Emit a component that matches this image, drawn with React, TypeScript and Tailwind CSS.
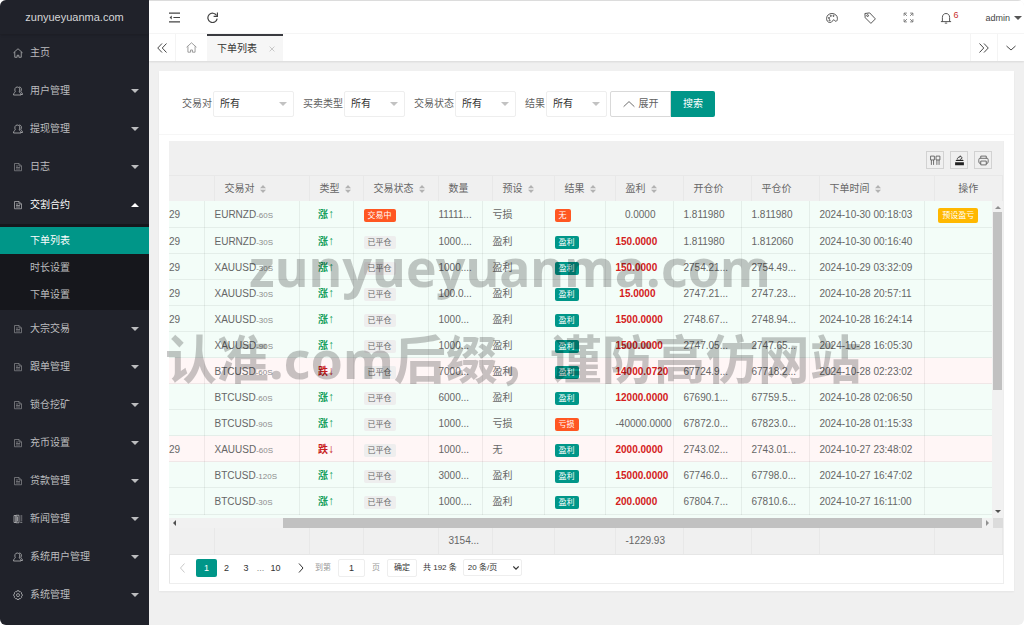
import React from "react";

type IconProps = { className?: string };

function classNames(...classes: (string | false | undefined)[]) {
  return classes.filter(Boolean).join(" ");
}

const Svg = ({
  className,
  children,
  box = "0 0 20 20",
}: IconProps & { children: React.ReactNode; box?: string }) => (
  <svg
    viewBox={box}
    className={classNames("shrink-0", className)}
    fill="none"
    stroke="currentColor"
    strokeWidth="1.5"
    aria-hidden="true"
  >
    {children}
  </svg>
);

const HomeIcon = ({ className }: IconProps) => (
  <Svg className={className}>
    <path d="M1 9.5 10 1.5l9 8M3.5 8v10.5h4.8v-4h3.4v4h4.8V8" />
  </Svg>
);

const UserIcon = ({ className }: IconProps) => (
  <Svg className={className}>
    <path d="M4.500 11.500C2.500 7 4 2 8.500 2S15 7 12.500 11.500c-.5 1 3.500 1.500 3.500 6.500H1c0-5 4-5.500 3.500-6.500z" />
    <path d="M12 2c5-.5 6 5.500 3.500 9 0 1.500 3.500 1.500 3.500 6h-3" />
  </Svg>
);

const FileIcon = ({ className }: IconProps) => (
  <Svg className={className}>
    <path d="M3 3h9l5 5v9.500H3zM12 3v5h5M6 8h4M6 11h8M6 14h8" />
  </Svg>
);

const BookIcon = ({ className }: IconProps) => (
  <Svg className={className}>
    <path d="M2 3h4v14H2zM6 2.500h6v15H6zM9 5v10M15 4h3.500M15 8h3.500M15 12h3.500M14.500 16.500h4" />
  </Svg>
);

const GearIcon = ({ className }: IconProps) => (
  <Svg className={className}>
    <path d="M8 1.500h4l.6 2.200 2.200-.6 2.600 2.700-.7 2.200 2 1v2.500l-2 1 .7 2.200-2.600 2.700-2.200-.6-.6 2.200H8l-.6-2.200-2.200.6-2.600-2.700.7-2.200-2-1V9l2-1-.7-2.200 2.600-2.700 2.200.6z" />
    <circle cx="10" cy="10.200" r="3" />
  </Svg>
);

const Caret = ({ up, className }: IconProps & { up?: boolean }) => (
  <svg
    viewBox="0 0 8 4"
    className={classNames("h-1 w-2 shrink-0", up && "rotate-180", className)}
    aria-hidden="true"
  >
    <path d="M0 0h8L4 4z" fill="currentColor" />
  </svg>
);

const SortIcon = () => (
  <svg viewBox="0 0 6 10" className="ml-[5px] h-[10px] w-[6px] shrink-0 text-[#b2b2b2]" aria-hidden="true">
    <path d="M0 4.200h6L3 1zM0 5.800h6L3 9z" fill="currentColor" />
  </svg>
);

const navTop = [
  { name: "主页", icon: HomeIcon, leaf: true },
  { name: "用户管理", icon: UserIcon },
  { name: "提现管理", icon: UserIcon },
  { name: "日志", icon: FileIcon },
  { name: "交割合约", icon: FileIcon, open: true },
];

const navSub = [
  { name: "下单列表", current: true },
  { name: "时长设置", current: false },
  { name: "下单设置", current: false },
];

const navBottom = [
  { name: "大宗交易", icon: FileIcon },
  { name: "跟单管理", icon: FileIcon },
  { name: "锁仓挖矿", icon: FileIcon },
  { name: "充币设置", icon: FileIcon },
  { name: "贷款管理", icon: FileIcon },
  { name: "新闻管理", icon: BookIcon },
  { name: "系统用户管理", icon: UserIcon },
  { name: "系统管理", icon: GearIcon },
];

type NavEntry = {
  name: string;
  icon: React.ComponentType<IconProps>;
  leaf?: boolean;
  open?: boolean;
};

const NavItem = ({ item }: { item: NavEntry }) => (
  <a
    href="#"
    className={classNames(
      "flex h-[38px] items-center pr-[10px] pl-[13px]",
      item.open ? "text-white" : "text-[#bcbdbf]"
    )}
  >
    <item.icon className={classNames("mr-[7px] h-[10px] w-[10px]", item.icon === FileIcon && "opacity-65")} />
    <span className="flex-1">{item.name}</span>
    {!item.leaf && <Caret up={item.open} />}
  </a>
);

const Sidebar = () => (
  <aside className="w-[149px] shrink-0 bg-[#20222a]">
    <div className="flex h-[34px] items-center justify-center text-[11px] text-[#d5d6d8] shadow-sm">
      zunyueyuanma.com
    </div>
    <nav>
      {navTop.map((item) => (
        <NavItem key={item.name} item={item} />
      ))}
      <div className="bg-[#16171c] pt-[3px] pb-[2px]">
        {navSub.map((item) => (
          <a
            key={item.name}
            href="#"
            className={classNames(
              "flex h-[27px] items-center pl-[30px]",
              item.current ? "bg-[#009688] text-white" : "text-[#bcbdbf]"
            )}
          >
            {item.name}
          </a>
        ))}
      </div>
      {navBottom.map((item) => (
        <NavItem key={item.name} item={item} />
      ))}
    </nav>
  </aside>
);

const topButton = "flex h-full w-[38px] items-center justify-center";

const TopBar = () => (
  <div className="flex h-[34px] items-center border-t border-b border-t-[#dcdcdc] border-b-[#f6f6f6] pt-px pr-[2px] pl-[6px] text-[#444]">
    <button className={topButton} aria-label="侧边伸缩">
      <Svg className="h-[11px] w-[11px]">
        <path d="M0 2h20M8 10h12M0 18h20" strokeWidth="2" />
        <path d="M5 6.500v7L1 10z" fill="currentColor" stroke="none" />
      </Svg>
    </button>
    <button className={topButton} aria-label="刷新">
      <Svg className="h-[11px] w-[11px]">
        <path d="M17.500 6.500A8.500 8.500 0 1 0 18.500 12" strokeWidth="2.200" />
        <path d="M19 1v7h-7" strokeWidth="2.200" />
      </Svg>
    </button>
    <div className="flex-1" />
    <button className={topButton} aria-label="主题">
      <Svg className="h-[12px] w-[12px]">
        <path d="M6 17.500C2.500 17 .8 14 1 10.500 1.300 5.500 5 2.500 10 2.500s9 3.500 9 8c0 3-.8 5-2.700 5-2 0-1.500-2.500-3.500-2.500-2.300 0-1.300 4.800-6.800 4.500z" />
        <circle cx="5" cy="10" r="1" />
        <circle cx="8" cy="6.500" r="1" />
        <circle cx="12.500" cy="6.500" r="1" />
        <circle cx="6" cy="13.800" r="1" />
      </Svg>
    </button>
    <button className={topButton} aria-label="便签">
      <Svg className="h-[12px] w-[12px]">
        <path d="M1.500 2.500 9.500 1.500l9.500 10-7.500 7.500L2 9.500z" />
        <circle cx="6" cy="6" r="1.500" />
      </Svg>
    </button>
    <button className={classNames(topButton, "text-[#666]")} aria-label="全屏">
      <Svg className="h-[11px] w-[11px]">
        <path d="M2 7V2h5M2.500 2.500 7 7M13 2h5v5M17.500 2.500 13 7M2 13v5h5M2.500 17.500 7 13M18 13v5h-5M17.500 17.500 13 13" />
      </Svg>
    </button>
    <button className={classNames(topButton, "relative")} aria-label="消息">
      <Svg className="h-[12px] w-[12px]">
        <path d="M1.500 16h17M4 16V9c0-4 2.500-6.500 6-6.500S16 5 16 9v7M8 18.500h4" />
      </Svg>
      <span className="absolute top-[7px] right-[7px] text-[9px] leading-3 text-[#c9302c]">6</span>
    </button>
    <button className="flex items-center gap-1 pl-[20px] text-[9px]">
      admin
      <Caret className="text-[#555]" />
    </button>
  </div>
);

const DoubleChevron = ({ className }: IconProps) => (
  <Svg className={classNames("h-[10px] w-[10px]", className)}>
    <path d="M10 1 1.500 10l8.500 9M19 1l-8.500 9 8.500 9" strokeWidth="1.800" />
  </Svg>
);

const TabBar = () => (
  <div className="relative flex h-[27px] items-stretch bg-white text-[#333] shadow-[0_1px_2px_rgba(0,0,0,0.1)]">
    <button className="flex w-[27px] items-center justify-center border-r border-[#f4f4f4]" aria-label="向左">
      <DoubleChevron />
    </button>
    <button className="flex w-[31px] items-center justify-center text-[#888]" aria-label="主页">
      <HomeIcon className="h-[11px] w-[11px]" />
    </button>
    <div className="flex w-[76px] items-center justify-between border-t-2 border-[#3a3b40] bg-[#f6f6f6] pr-2 pl-[10px]">
      <a href="#">下单列表</a>
      <button aria-label="关闭" className="text-[#c4c4c4]">
        <Svg className="h-[6px] w-[6px]">
          <path d="M2 2l16 16M18 2 2 18" strokeWidth="3" />
        </Svg>
      </button>
    </div>
    <div className="flex-1" />
    <button className="flex w-[27px] items-center justify-center border-l border-[#f4f4f4]" aria-label="向右">
      <DoubleChevron className="rotate-180" />
    </button>
    <button className="flex w-[27px] items-center justify-center border-l border-[#f4f4f4]" aria-label="更多">
      <Svg className="h-[10px] w-[10px]">
        <path d="M1 6l9 8 9-8" strokeWidth="1.800" />
      </Svg>
    </button>
  </div>
);

const filters = [
  { id: "pair", label: "交易对", wide: true },
  { id: "side", label: "买卖类型" },
  { id: "status", label: "交易状态" },
  { id: "result", label: "结果" },
];

const SearchForm = () => (
  <form className="flex h-[64px] items-center border-b border-[#f6f6f6] pt-[2px] pl-[23px] text-[#5f5f5f]">
    <div className="flex gap-[9px]">
      {filters.map((f) => (
        <div key={f.id} className="flex items-center gap-px">
          <label htmlFor={f.id}>{f.label}</label>
          <div className="relative">
            <select
              id={f.id}
              className={classNames(
                "h-[26px] appearance-none rounded-xs border border-[#eee] bg-white pl-[6px] text-[#333]",
                f.wide ? "w-[81px]" : "w-[61px]"
              )}
            >
              <option>所有</option>
            </select>
            <Caret className="pointer-events-none absolute top-[11px] right-[7px] text-[#c2c2c2]" />
          </div>
        </div>
      ))}
    </div>
    <button
      type="button"
      className="ml-[3px] flex h-[26px] w-[61px] items-center justify-center gap-1 rounded-l-xs border border-[#d9d9d9]"
    >
      <Svg className="h-[12px] w-[12px]">
        <path d="M1 14.500 10 6l9 8.500" />
      </Svg>
      展开
    </button>
    <button type="submit" className="h-[26px] w-[44px] rounded-r-xs bg-[#009688] text-white">
      搜索
    </button>
  </form>
);

const toolButton = "flex h-[18px] w-[18px] items-center justify-center border border-[#d2d2d2]";

const Toolbar = () => (
  <div className="flex h-[34px] items-center justify-end gap-[6px] bg-[#f0f0f0] pt-1 pr-[11px] text-[#555]">
    <button className={toolButton} aria-label="筛选列">
      <Svg className="h-[11px] w-[11px]">
        <path d="M1 2h7v7H1zM11 2h7v7h-7zM2.500 9v9M6.500 9v9M12.500 9v9M16.500 9v9" />
      </Svg>
    </button>
    <button className={classNames(toolButton, "text-[#222]")} aria-label="导出">
      <Svg className="h-[11px] w-[11px]">
        <path d="M2 13h16v5.500H2zM3 11c0-1.500 1-2.500 3-2.500h9c1.500 0 2.500 1 2.500 2.500z" fill="currentColor" stroke="none" />
        <path d="M6 8c0-3 2-4.500 5-4.500V1.500l4 3.500-4 3.500" />
      </Svg>
    </button>
    <button className={toolButton} aria-label="打印">
      <Svg className="h-[11px] w-[11px]">
        <path d="M5 6V2h10v4M5 15H2.500C1 13 1 8 2.500 6h15c1.500 2 1.500 7 0 9H15M5 11h10v7H5z" />
      </Svg>
    </button>
  </div>
);

const columns = [
  { name: "交易对", sort: true },
  { name: "类型", sort: true },
  { name: "交易状态", sort: true },
  { name: "数量", sum: "3154..." },
  { name: "预设", sort: true },
  { name: "结果", sort: true },
  { name: "盈利", sort: true, sum: "-1229.93" },
  { name: "开仓价" },
  { name: "平仓价" },
  { name: "下单时间", sort: true },
  { name: "操作", center: true },
];

const Cols = ({ first }: { first: string }) => (
  <colgroup>
    <col className={first} />
    <col className="w-[95px]" />
    <col className="w-[54px]" />
    <col className="w-[75px]" />
    <col className="w-[54px]" />
    <col className="w-[62px]" />
    <col className="w-[61px]" />
    <col className="w-[68px]" />
    <col className="w-[68px]" />
    <col className="w-[68px]" />
    <col className="w-[115px]" />
    <col />
  </colgroup>
);

type Row = [
  day: string,
  pair: string,
  period: string,
  up: boolean,
  open: boolean,
  amount: string,
  preset: string,
  result: string,
  profit: string,
  openPrice: string,
  closePrice: string,
  time: string
];

const rows: Row[] = [
  ["29", "EURNZD", "60S", true, true, "11111...", "亏损", "无", "0.0000", "1.811980", "1.811980", "2024-10-30 00:18:03"],
  ["29", "EURNZD", "30S", true, false, "1000....", "盈利", "盈利", "150.0000", "1.811980", "1.812060", "2024-10-30 00:16:40"],
  ["29", "XAUUSD", "30S", true, false, "1000....", "盈利", "盈利", "150.0000", "2754.21...", "2754.49...", "2024-10-29 03:32:09"],
  ["29", "XAUUSD", "30S", true, false, "100.0...", "盈利", "盈利", "15.0000", "2747.21...", "2747.23...", "2024-10-28 20:57:11"],
  ["29", "XAUUSD", "30S", true, false, "1000...", "盈利", "盈利", "1500.0000", "2748.67...", "2748.94...", "2024-10-28 16:24:14"],
  ["", "XAUUSD", "90S", true, false, "1000...", "盈利", "盈利", "1500.0000", "2747.05...", "2747.65...", "2024-10-28 16:05:30"],
  ["", "BTCUSD", "60S", false, false, "7000...", "盈利", "盈利", "14000.0720", "67724.9...", "67718.2...", "2024-10-28 02:23:02"],
  ["", "BTCUSD", "60S", true, false, "6000...", "盈利", "盈利", "12000.0000", "67690.1...", "67759.5...", "2024-10-28 02:06:50"],
  ["", "BTCUSD", "90S", true, false, "1000...", "亏损", "亏损", "-40000.0000", "67872.0...", "67823.0...", "2024-10-28 01:15:33"],
  ["29", "XAUUSD", "60S", false, false, "1000...", "无", "盈利", "2000.0000", "2743.02...", "2743.01...", "2024-10-27 23:48:02"],
  ["", "BTCUSD", "120S", true, false, "3000...", "盈利", "盈利", "15000.0000", "67746.0...", "67798.0...", "2024-10-27 16:47:02"],
  ["", "BTCUSD", "30S", true, false, "1000....", "盈利", "盈利", "200.0000", "67804.7...", "67810.6...", "2024-10-27 16:11:00"],
];

const badge = "inline-block rounded-xs px-1 text-[8px] leading-[13px]";
const cellBase = "border-r border-b border-black/6 pt-[3px]";
const cell = cellBase + " pl-[10px]";

const OrderRow = ({ row }: { row: Row }) => {
  const [day, pair, period, up, open, amount, preset, result, profit, openPrice, closePrice, time] = row;
  const won = result === "盈利";
  return (
    <tr className={up ? "bg-[#f3fdf8]" : "bg-[#fff6f6]"}>
      <td className={cellBase}>{day}</td>
      <td className={cell}>
        {pair}
        <span className="text-[8px] leading-none text-[#8c8c8c]">-{period}</span>
      </td>
      <td className={classNames(cellBase, "text-center", up ? "text-[#16a05c]" : "text-[#c81e1e]")}>
        <b>{up ? "涨" : "跌"}</b>
        <span className="text-[12px] leading-none">{up ? "↑" : "↓"}</span>
      </td>
      <td className={cell}>
        <span className={classNames(badge, open ? "bg-[#ff5722] text-white" : "bg-[#eeeeee]")}>
          {open ? "交易中" : "已平仓"}
        </span>
      </td>
      <td className={cell}>{amount}</td>
      <td className={cell}>{preset}</td>
      <td className={cell}>
        <span className={classNames(badge, "text-white", won ? "bg-[#009688]" : "bg-[#ff5722]")}>{result}</span>
      </td>
      <td className={cell}>
        <span className={classNames("inline-block min-w-[40px] text-right", won && "font-bold text-[#d42020]")}>
          {profit}
        </span>
      </td>
      <td className={cell}>{openPrice}</td>
      <td className={cell}>{closePrice}</td>
      <td className={cell}>{time}</td>
      <td className="border-b border-black/6 pt-[3px] text-center">
        {open && (
          <button className="rounded-xs bg-[#ffb800] px-1 text-[8px] leading-[15px] text-white">预设盈亏</button>
        )}
      </td>
    </tr>
  );
};

const VerticalScroll = () => (
  <div className="flex w-[11px] shrink-0 flex-col items-center bg-[#f1f1f1] text-[#505050]">
    <Svg box="0 0 6 3" className="mt-[5px] h-[3px] w-[6px] opacity-60">
      <path d="M0 3h6L3 0z" fill="currentColor" stroke="none" />
    </Svg>
    <div className="mt-[3px] h-[178px] w-[9px] bg-[#c1c1c1]" />
    <div className="flex-1" />
    <Svg box="0 0 6 3" className="mb-[5px] h-[3px] w-[6px]">
      <path d="M0 0h6L3 3z" fill="currentColor" stroke="none" />
    </Svg>
  </div>
);

const HorizontalScroll = () => (
  <div className="flex h-[10px] items-stretch bg-[#f1f1f1] text-[#505050]">
    <div className="flex w-[114px] items-center pl-1">
      <Svg box="0 0 3 6" className="h-[6px] w-[3px]">
        <path d="M3 0v6L0 3z" fill="currentColor" stroke="none" />
      </Svg>
    </div>
    <div className="flex-1 bg-[#c1c1c1]" />
    <div className="flex w-[11px] items-center justify-center">
      <Svg box="0 0 3 6" className="h-[6px] w-[3px] opacity-60">
        <path d="M0 0v6l3-3z" fill="currentColor" stroke="none" />
      </Svg>
    </div>
    <div className="w-[10px] bg-[#dcdcdc]" />
  </div>
);

const Pagination = () => (
  <div className="flex h-[29px] items-center border-t border-l border-[#e6e6e6] pb-[2px] text-[8px] text-[#333]">
    <button aria-label="上一页" className="flex w-[26px] justify-center text-[#c8c8c8]">
      <Svg className="h-[10px] w-[10px]">
        <path d="M13 1 5 10l8 9" strokeWidth="2" />
      </Svg>
    </button>
    <button className="h-[18px] w-[21px] rounded-xs bg-[#009688] text-[9px] text-white">1</button>
    <button className="w-[19px] text-[9px]">2</button>
    <button className="w-[20px] text-[9px]">3</button>
    <span className="w-[9px] text-center text-[9px] text-[#888]">...</span>
    <button className="w-[21px] text-[9px]">10</button>
    <button aria-label="下一页" className="flex w-[29px] justify-center">
      <Svg className="h-[10px] w-[10px]">
        <path d="M6 1l8 9-8 9" strokeWidth="2" />
      </Svg>
    </button>
    <label htmlFor="page" className="text-[#999]">
      到第
    </label>
    <input
      id="page"
      defaultValue="1"
      className="mx-[7px] h-[18px] w-[27px] rounded-xs border border-[#eee] text-center text-[9px]"
    />
    <span className="text-[#999]">页</span>
    <button className="ml-[7px] h-[18px] w-[30px] rounded-xs border border-[#eee]">确定</button>
    <span className="mx-[6px]">共 192 条</span>
    <div className="relative">
      <select
        aria-label="每页条数"
        className="h-[17px] w-[59px] appearance-none rounded-xs border border-[#eee] bg-white pl-1"
      >
        <option>20 条/页</option>
      </select>
      <Svg className="pointer-events-none absolute top-[6px] right-[3px] h-[6px] w-[6px]">
        <path d="M1 5l9 9 9-9" strokeWidth="4" />
      </Svg>
    </div>
  </div>
);

const OrderGrid = () => (
  <div className="relative mx-[10px] mt-[6px] border-r border-b border-[#eee]">
    <Toolbar />
    <table className="w-full table-fixed border-t border-[#e8e8e8] bg-[#f0f0f0] text-left">
      <Cols first="w-[45px]" />
      <thead>
        <tr className="h-[25px]">
          <th className="border-r border-[#e8e8e8]" />
          {columns.map((col) => (
            <th
              key={col.name}
              className={classNames(
                "border-r border-[#e8e8e8] pt-[2px] font-normal",
                col.center ? "text-center" : "pl-[10px]"
              )}
            >
              <span className="inline-flex items-center">
                {col.name}
                {col.sort && <SortIcon />}
              </span>
            </th>
          ))}
        </tr>
      </thead>
    </table>
    <div className="flex">
      <div className="min-w-0 flex-1 bg-[#f3fdf8] pb-[3px]">
        <table className="h-[314px] w-full table-fixed whitespace-nowrap">
          <Cols first="w-[35px]" />
          <tbody>
            {rows.map((row) => (
              <OrderRow key={row[11]} row={row} />
            ))}
          </tbody>
        </table>
      </div>
      <VerticalScroll />
    </div>
    <HorizontalScroll />
    <table className="w-full table-fixed bg-[#f0f0f0]">
      <Cols first="w-[45px]" />
      <tbody>
        <tr className="h-[26px]">
          <td className="border-r border-[#e8e8e8]" />
          {columns.map((col) => (
            <td key={col.name} className="border-r border-[#e8e8e8] pl-[10px]">
              {col.sum}
            </td>
          ))}
        </tr>
      </tbody>
    </table>
    <Pagination />
    <div className="pointer-events-none absolute top-[80px] left-0 font-['Noto_Sans','Noto_Sans_CJK_SC',sans-serif] text-[52px] leading-[92px] font-bold whitespace-nowrap text-black/22">
      <div className="pl-[80px]">zunyueyuanma.com</div>
      <div className="-ml-1">认准.com后缀，谨防高仿网站</div>
    </div>
  </div>
);

export default function App() {
  return (
    <div className="flex min-h-screen overflow-hidden rounded-md bg-[#f0f0f0] font-['Liberation_Sans','Noto_Sans_CJK_SC',sans-serif] text-[10px] leading-[14px] text-[#666]">
      <Sidebar />
      <div className="min-w-0 flex-1">
        <header className="bg-white">
          <TopBar />
          <TabBar />
        </header>
        <main className="mx-[10px] mt-[10px] bg-white pb-[7px] shadow-xs">
          <SearchForm />
          <OrderGrid />
        </main>
      </div>
    </div>
  );
}
